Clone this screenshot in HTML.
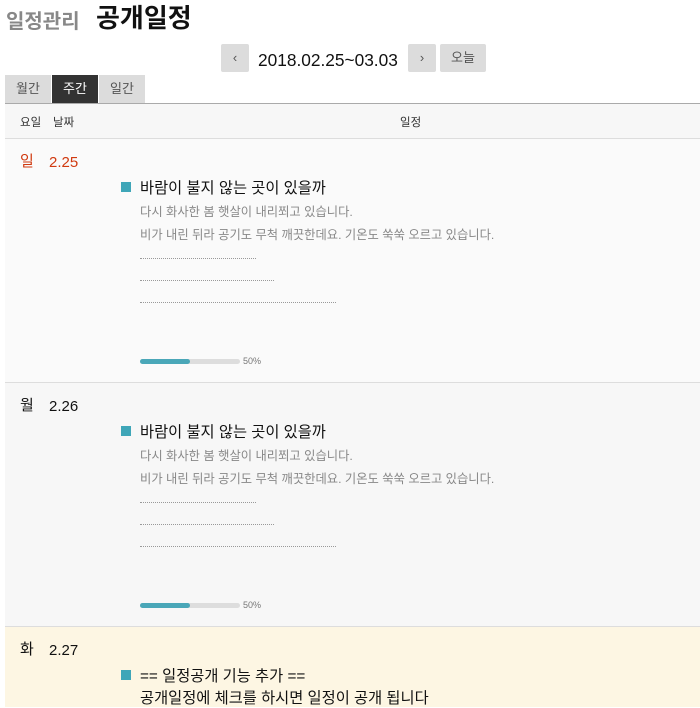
<!DOCTYPE html>
<html><head><meta charset="utf-8"><style>
*{margin:0;padding:0;box-sizing:border-box}
body{width:700px;height:700px;overflow:hidden;background:#fff;font-family:"Liberation Sans","Noto Sans CJK KR",sans-serif;position:relative}
.a{position:absolute;white-space:nowrap;line-height:1.2;margin-top:3px}
.btn{position:absolute;background:#dcdcdc;border-radius:2px;top:44px;height:28px;text-align:center;line-height:28px;color:#555;font-size:13px}
.tab{position:absolute;top:75px;height:28px;width:46px;background:#dcdcdc;text-align:center;line-height:28px;font-size:13px;color:#555}
.row{position:absolute;left:5px;width:695px;border-bottom:1px solid #ddd}
.sq{position:absolute;left:121px;width:10px;height:10px;background:#3fa6b8}
.t{font-size:15.3px;color:#111}
.d{font-size:12.3px;color:#888}
.dots{position:absolute;left:140px;border-top:1px dotted #999;height:1px}
.bar{position:absolute;left:140px;width:100px;height:5px;border-radius:3px;background:#ddd}
.bar i{position:absolute;left:0;top:0;width:50px;height:5px;border-radius:3px;background:#4aa7b8}
</style></head><body>
<div class="a" style="left:6px;top:9px;margin-top:1px;font-size:20px;color:#888;font-weight:bold">일정관리</div>
<div class="a" style="left:96px;top:3px;margin-top:0;font-size:26px;color:#111;font-weight:bold">공개일정</div>
<div class="btn" style="left:221px;width:28px">&lsaquo;</div>
<div class="a" style="left:258px;top:47px;font-size:17.3px;color:#111">2018.02.25~03.03</div>
<div class="btn" style="left:408px;width:28px">&rsaquo;</div>
<div class="btn" style="left:440px;width:46px">오늘</div>
<div class="tab" style="left:5px">월간</div>
<div class="tab" style="left:52px;background:#333;color:#fff">주간</div>
<div class="tab" style="left:99px">일간</div>
<div class="row" style="top:103px;height:36px;background:#f7f7f7;border-top:1px solid #aaa"></div>
<div class="a" style="left:20px;top:114px;font-size:11.5px;color:#333">요일</div>
<div class="a" style="left:53px;top:114px;font-size:11.5px;color:#333">날짜</div>
<div class="a" style="left:400px;top:114px;font-size:11.5px;color:#333">일정</div>

<div class="row" style="top:139px;height:244px;background:#fafafa"></div>
<div class="a" style="left:20px;top:150px;font-size:15px;color:#d03a10">일</div>
<div class="a" style="left:49px;top:151px;font-size:15px;color:#d03a10">2.25</div>
<div class="sq" style="top:182px"></div>
<div class="a t" style="left:140px;top:177px">바람이 불지 않는 곳이 있을까</div>
<div class="a d" style="left:140px;top:202px">다시 화사한 봄 햇살이 내리쬐고 있습니다.</div>
<div class="a d" style="left:140px;top:225px">비가 내린 뒤라 공기도 무척 깨끗한데요. 기온도 쑥쑥 오르고 있습니다.</div>
<div class="dots" style="top:258px;width:116px"></div>
<div class="dots" style="top:280px;width:134px"></div>
<div class="dots" style="top:302px;width:196px"></div>
<div class="bar" style="top:359px"><i></i></div>
<div class="a" style="left:243px;top:353px;font-size:9px;color:#777">50%</div>

<div class="row" style="top:383px;height:244px;background:#f7f7f7"></div>
<div class="a" style="left:20px;top:394px;font-size:15px;color:#111">월</div>
<div class="a" style="left:49px;top:395px;font-size:15px;color:#111">2.26</div>
<div class="sq" style="top:426px"></div>
<div class="a t" style="left:140px;top:421px">바람이 불지 않는 곳이 있을까</div>
<div class="a d" style="left:140px;top:446px">다시 화사한 봄 햇살이 내리쬐고 있습니다.</div>
<div class="a d" style="left:140px;top:469px">비가 내린 뒤라 공기도 무척 깨끗한데요. 기온도 쑥쑥 오르고 있습니다.</div>
<div class="dots" style="top:502px;width:116px"></div>
<div class="dots" style="top:524px;width:134px"></div>
<div class="dots" style="top:546px;width:196px"></div>
<div class="bar" style="top:603px"><i></i></div>
<div class="a" style="left:243px;top:597px;font-size:9px;color:#777">50%</div>

<div class="row" style="top:627px;height:80px;background:#fdf6e3;border:none"></div>
<div class="a" style="left:20px;top:638px;font-size:15px;color:#111">화</div>
<div class="a" style="left:49px;top:639px;font-size:15px;color:#111">2.27</div>
<div class="sq" style="top:670px"></div>
<div class="a t" style="left:140px;top:665px">== 일정공개 기능 추가 ==</div>
<div class="a t" style="left:140px;top:687px">공개일정에 체크를 하시면 일정이 공개 됩니다</div>
</body></html>
